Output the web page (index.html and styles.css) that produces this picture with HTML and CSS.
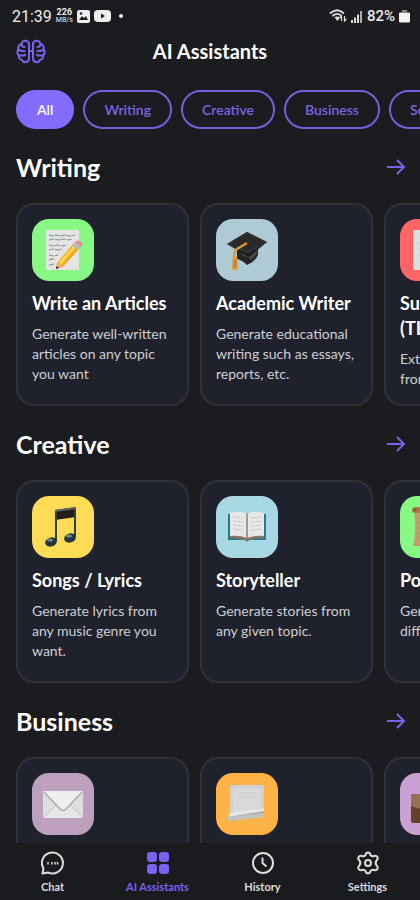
FILE: index.html
```html
<!DOCTYPE html>
<html lang="en">
  <head>
    <meta charset="UTF-8" />
    <meta name="viewport" content="width=device-width, initial-scale=1.0" />
    <title>AI Assistants</title>
    <link rel="stylesheet" href="styles.css">
  </head>
  <body>
    <!-- Status bar -->
    <div class="status-bar">
      <div class="status-group">
        <span class="clock">21:39</span>
        <span class="net-speed"><b>226</b><small>MB/s</small></span>
        <svg width="13" height="13" viewBox="0 0 13 13">
          <rect width="13" height="13" rx="2" fill="#eeeeee" />
          <path d="M2 10l3-4 2 2 2-2 2 4z" fill="#1b1c20" />
          <circle cx="4" cy="3.5" r="1.2" fill="#1b1c20" />
        </svg>
        <svg width="17" height="12" viewBox="0 0 17 12">
          <rect width="17" height="12" rx="4" fill="#eeeeee" />
          <path d="M7 3.5v5L11 6z" fill="#1b1c20" />
        </svg>
        <span class="status-dot"></span>
      </div>
      <div class="status-group">
        <svg width="18" height="14" viewBox="0 0 18 14" fill="none" stroke="#dddddd" stroke-width="1.8">
          <path d="M1 4.5Q8 -2 15 4.5M3.5 7Q8 3 12 6.5" />
          <path d="M5.5 8.5L8.5 12L11 8.5Q8 6.5 5.5 8.5z" fill="#dddddd" stroke="none" />
          <path d="M12.5 12V7l-2 2M15.5 7v5l2-2" stroke-width="1.2" />
        </svg>
        <svg width="12" height="13" viewBox="0 0 12 13" fill="#dddddd">
          <path d="M0 10h2v3H0zM3 7.5h2V13H3zM6 4.5h2V13H6z" />
          <path d="M9 1h2v12H9z" opacity=".75" />
        </svg>
        <span class="battery-level">82%</span>
        <svg width="11" height="14" viewBox="0 0 11 14">
          <path d="M3 1h5v2h1.5Q11 3 11 4.5H0Q0 3 1.5 3H3z" fill="#888888" />
          <path d="M0 4h11v8q0 1.5-1.5 1.5h-8Q0 13.5 0 12z" fill="#f4f4f4" />
        </svg>
      </div>
    </div>

    <!-- App header -->
    <header class="app-header">
      <svg class="logo" width="30" height="30" viewBox="0 0 30 30">
        <path d="M13 7a4 4 0 0 0-7.500 1A4 4 0 0 0 2.500 13.500a4 4 0 0 0 .5 6A4 4 0 0 0 6 24a3.700 3.700 0 0 0 7-1z" />
        <path d="M17 7a4 4 0 0 1 7.500 1A4 4 0 0 1 27.500 13.500a4 4 0 0 1-.5 6A4 4 0 0 1 24 24a3.700 3.700 0 0 1-7-1z" />
        <path d="M13 15h4M5.500 8q0 3 3 3M2.500 13.500q2 2 6 1.500M3 19.500h5q1 0 1-1M24.500 8q0 3-3 3M27.500 13.500q-2 2-6 1.500M27 19.500h-5q-1 0-1-1" />
      </svg>
      <h1>AI Assistants</h1>
    </header>

    <!-- Category filter -->
    <div class="chips">
      <button class="chip active">All</button>
      <button class="chip">Writing</button>
      <button class="chip">Creative</button>
      <button class="chip">Business</button>
      <button class="chip">Social Media</button>
    </div>

    <main class="content">
      <section>
        <div class="section-head">
          <h2>Writing</h2>
          <a href="#writing" aria-label="More writing assistants">
            <svg class="arrow" width="20" height="18" viewBox="0 0 20 18"><path d="M1 9h17M11 2l7 7-7 7" /></svg>
          </a>
        </div>
        <div class="cards" id="writing">
          <article class="card">
            <div class="tile green">
              <svg width="42" height="42" viewBox="0 0 42 42">
                <path d="M4 1h33v40H4z" fill="#e4e5e2" />
                <path d="M7 6l4 1 3-1 5 1 4-1 5 1 5-1M7 11l5-1 4 1 6-1 5 1 3-1M7 16l4 1 4-1 5 1 4-1M7 21l5-1 4 1 4-1M7 26l5 1 4-1M7 31l3-1 3 1M7 36l5-1" fill="none" stroke="#8b8e91" stroke-width="1.2" stroke-dasharray="5 1" />
                <path d="M15 34L32 14l6 5-17 19-7 2z" fill="#efaa20" />
                <path d="M17 33L33 15l2 2-16 19z" fill="#ffd452" />
                <path d="M15 33l6 5-7 2z" fill="#dfb77e" />
                <path d="M14.5 37l2.5 2-3 1z" fill="#292522" />
                <path d="M30 16l3-3 6 5-3 3z" fill="#b9bdc4" />
                <path d="M33 13q3-3 6 0 3 2 0 5z" fill="#eb8790" />
              </svg>
            </div>
            <h3>Write an Articles</h3>
            <p>Generate well-written articles on any topic you want</p>
          </article>
          <article class="card">
            <div class="tile steel">
              <svg width="42" height="42" viewBox="0 0 42 42">
                <path d="M11 20v10q5 1 10 6 8-3 11-10V17z" fill="#242424" />
                <path d="M13 24q8 1 12 7l6-6v-4L20 28z" fill="#4a4947" />
                <path d="M1 15L21 3l20 10-18 15z" fill="#1d1d1e" />
                <path d="M1 15L21 3l20 10-19 12z" fill="#343434" />
                <path d="M4 15L21 5l17 8-17 9z" fill="#292929" />
                <path d="M21 14l-10 6q-3 2-3 9" fill="none" stroke="#d99b30" stroke-width="2.5" />
                <path d="M7 27h4l1 14H6z" fill="#e6a13a" />
                <path d="M8 31v9M10 30v9" stroke="#b66e1c" />
              </svg>
            </div>
            <h3>Academic Writer</h3>
            <p>Generate educational writing such as essays, reports, etc.</p>
          </article>
          <article class="card">
            <div class="tile red">
              <svg width="42" height="42" viewBox="0 0 42 42">
                <path d="M3 1h33v40H3z" fill="#dededc" />
                <path d="M8 8h22M8 14h22M8 20h22M8 26h22M8 32h15" stroke="#cfcfcd" />
              </svg>
            </div>
            <h3>Summarize (TL;DR)</h3>
            <p>Extract key points from long texts</p>
          </article>
        </div>
      </section>

      <section>
        <div class="section-head">
          <h2>Creative</h2>
          <a href="#creative" aria-label="More creative assistants">
            <svg class="arrow" width="20" height="18" viewBox="0 0 20 18"><path d="M1 9h17M11 2l7 7-7 7" /></svg>
          </a>
        </div>
        <div class="cards" id="creative">
          <article class="card">
            <div class="tile yellow">
              <svg width="42" height="42" viewBox="0 0 42 42">
                <path d="M13 4l21-3v10l-21 3z" fill="#251e1b" />
                <path d="M14 35V5M33 31V2" stroke="#294049" stroke-width="2" />
                <path d="M13 4l21-3v2L13 6z" fill="#5c6667" />
                <ellipse cx="9" cy="36" rx="6" ry="4.5" transform="rotate(-15 9 36)" fill="#26353b" />
                <ellipse cx="28" cy="32" rx="6" ry="4.5" transform="rotate(-15 28 32)" fill="#26353b" />
                <ellipse cx="8" cy="34" rx="3" ry="1.5" fill="#6f8b8f" />
                <ellipse cx="27" cy="30" rx="3" ry="1.5" fill="#6f8b8f" />
              </svg>
            </div>
            <h3>Songs / Lyrics</h3>
            <p>Generate lyrics from any music genre you want.</p>
          </article>
          <article class="card">
            <div class="tile sky">
              <svg width="42" height="42" viewBox="0 0 42 42">
                <path d="M2 8h38v26H23q-2 3-4 0H2z" fill="#267993" />
                <path d="M4 7q10-3 17 1 7-4 17-1v24q-10-1-17 2-7-3-17-2z" fill="#e7e7e5" />
                <path d="M20 7l1 1 1-1v26h-2z" fill="#9a9b9a" />
                <path d="M4 30q10-1 17 2 7-3 17-2v2q-10 0-17 3-7-3-17-3z" fill="#8b755e" />
                <path d="M7 11l10 1M7 15l10 1M7 19l10 1M7 23l10 1M25 12l10-1M25 16l10-1M25 20l10-1M25 24l10-1" stroke="#c4c6c6" stroke-dasharray="3 1" />
              </svg>
            </div>
            <h3>Storyteller</h3>
            <p>Generate stories from any given topic.</p>
          </article>
          <article class="card">
            <div class="tile green">
              <svg width="42" height="42" viewBox="0 0 42 42">
                <path d="M4 4h31q-3 17 1 36H3q4-16 1-36z" fill="#c79a6c" />
                <path d="M2 4q0-3 4-3h30v6H5Q2 7 2 4z" fill="#ad7c50" />
                <circle cx="5" cy="4" r="2" fill="#8f6342" />
                <path d="M9 12h21M9 17h21M9 22h21M9 27h21M9 32h21" stroke="#b98a60" />
              </svg>
            </div>
            <h3>Poems</h3>
            <p>Generate poems in different styles</p>
          </article>
        </div>
      </section>

      <section>
        <div class="section-head">
          <h2>Business</h2>
          <a href="#business" aria-label="More business assistants">
            <svg class="arrow" width="20" height="18" viewBox="0 0 20 18"><path d="M1 9h17M11 2l7 7-7 7" /></svg>
          </a>
        </div>
        <div class="cards" id="business">
          <article class="card">
            <div class="tile mauve">
              <svg width="42" height="42" viewBox="0 0 42 42">
                <path d="M1 8h40v27H1z" fill="#dededf" />
                <path d="M1 35l15-14h10l15 14z" fill="#e6e6e6" />
                <path d="M1 35l13-13M41 35L28 22" stroke="#c4c4c6" />
                <path d="M1 8h40L24 26q-3 3-6 0z" fill="#eeeeee" />
                <path d="M2 9l16 17q3 3 6 0L40 9" fill="none" stroke="#a9a9ac" stroke-width="1.4" />
              </svg>
            </div>
          </article>
          <article class="card">
            <div class="tile orange">
              <svg width="42" height="42" viewBox="0 0 42 42">
                <path d="M4 2h34v26L4 32z" fill="#cfd0d0" />
                <path d="M7 5h28v21L7 30z" fill="#d8d9d9" />
                <path d="M11 10h19M11 14h19" stroke="#cbcccc" />
                <path d="M3 32l35-7v8L3 38q-3-2 0-6z" fill="#a9abab" />
                <path d="M4 30l34-5v3L2 34z" fill="#e7e7e7" />
                <path d="M2 34l36-4v4L2 38z" fill="#c1c3c3" />
              </svg>
            </div>
          </article>
          <article class="card">
            <div class="tile lilac">
              <svg width="42" height="42" viewBox="0 0 42 42">
                <path d="M14 12V8h14v4" fill="none" stroke="#4b2e1e" stroke-width="3" />
                <rect x="1" y="11" width="40" height="29" rx="2" fill="#65402a" />
                <path d="M1 13q0-2 2-2h36q2 0 2 2v10q-20 8-40 0z" fill="#967052" />
              </svg>
            </div>
          </article>
        </div>
      </section>
    </main>

    <!-- Bottom navigation -->
    <nav class="bottom-nav">
      <a href="#chat">
        <svg width="24" height="24" viewBox="0 0 24 24" fill="none" stroke="currentColor" stroke-width="2">
          <path d="M1.5 22.5l1-5A10.500 10.500 0 1 1 7 21.500z" stroke-linejoin="round" />
          <path d="M7 11v2.500M11 11v2.500M14 11v2.500M16.500 11v2.500" stroke-width="1.500" />
        </svg>
        Chat
      </a>
      <a href="#assistants" class="active">
        <svg width="24" height="24" viewBox="0 0 24 24" fill="currentColor">
          <rect x="1" y="1" width="10" height="10" rx="3" />
          <rect x="13" y="1" width="10" height="10" rx="3" />
          <rect x="1" y="13" width="10" height="10" rx="3" />
          <rect x="13" y="13" width="10" height="10" rx="3" />
        </svg>
        AI Assistants
      </a>
      <a href="#history">
        <svg width="24" height="24" viewBox="0 0 24 24" fill="none" stroke="currentColor" stroke-width="2">
          <circle cx="12" cy="12" r="10" />
          <path d="M11.5 6.500V12l4 3.500" />
        </svg>
        History
      </a>
      <a href="#settings">
        <svg width="24" height="24" viewBox="0 0 24 24" fill="none" stroke="currentColor" stroke-width="2" stroke-linejoin="round">
          <path d="M9.5 4q.5-2.500 2.500-2.500T14.500 4q1.500 1.700 3.500 1 2.400-.7 3.400 1t-.8 3.400q-2 2.600 0 5.200 1.800 1.700.8 3.400t-3.400 1q-2-.7-3.500 1-.5 2.500-2.500 2.500T9.500 20Q8 18.300 6 19q-2.400.7-3.400-1t.8-3.400q2-2.600 0-5.200Q1.600 7.700 2.600 6T6 5q2 .7 3.500-1z" />
          <circle cx="12" cy="12" r="3" />
        </svg>
        Settings
      </a>
    </nav>
  </body>
</html>
```
FILE: styles.css
```css
* {
  box-sizing: border-box;
}

body {
  margin: 0;
  height: 100vh;
  display: flex;
  flex-direction: column;
  overflow: hidden;
  background: #1b1c20;
  color: #ffffff;
  font-family: Lato, sans-serif;
}

h1,
h2,
h3,
p {
  margin: 0;
}

svg {
  display: block;
  flex-shrink: 0;
}

/* Status bar */
.status-bar {
  display: flex;
  justify-content: space-between;
  align-items: center;
  height: 32px;
  padding: 0 10px 0 12px;
  color: #eeeeee;
  font-family: Roboto, sans-serif;
}

.status-group {
  display: flex;
  align-items: center;
  gap: 4px;
}

.clock {
  font-size: 16px;
}

.net-speed {
  display: flex;
  flex-direction: column;
  text-align: center;
  line-height: 8px;
}

.net-speed b {
  font-size: 9px;
}

.net-speed small {
  font-size: 7px;
}

.status-dot {
  width: 4px;
  height: 4px;
  margin-left: 4px;
  border-radius: 50%;
  background: #eeeeee;
}

.battery-level {
  font-size: 15px;
  font-weight: 500;
}

/* App header */
.app-header {
  display: grid;
  grid-template-columns: 30px 1fr 30px;
  align-items: center;
  height: 38px;
  padding: 0 16px;
}

.logo {
  fill: none;
  stroke: #7a62f0;
  stroke-width: 2;
  stroke-linecap: round;
  stroke-linejoin: round;
}

.app-header h1 {
  font-size: 20px;
  text-align: center;
}

/* Category filter */
.chips {
  display: flex;
  flex-shrink: 0;
  gap: 9px;
  padding: 20px 16px 22px;
  overflow-x: auto;
  scrollbar-width: none;
}

.chip {
  flex-shrink: 0;
  height: 39px;
  padding: 0 19px;
  border: 2px solid #765fdc;
  border-radius: 20px;
  background: none;
  color: #7c65e4;
  font-family: inherit;
  font-size: 14px;
  font-weight: 600;
  cursor: pointer;
}

.chip.active {
  border-color: #836bfd;
  background: #836bfd;
  color: #ffffff;
}

/* Sections */
.content {
  flex: 1;
  min-height: 0;
  overflow-y: auto;
  scrollbar-width: none;
}

.section-head {
  display: flex;
  justify-content: space-between;
  align-items: center;
  height: 32px;
  margin-bottom: 20px;
  padding: 0 14px 0 16px;
}

.section-head h2 {
  font-size: 25px;
  line-height: 32px;
}

.arrow {
  fill: none;
  stroke: #7a62e8;
  stroke-width: 2;
}

.cards {
  display: flex;
  gap: 11px;
  margin-bottom: 22px;
  padding: 0 16px;
  overflow-x: auto;
  scrollbar-width: none;
}

.card {
  flex: 0 0 173px;
  min-height: 203px;
  padding: 14px;
  border: 2px solid #303137;
  border-radius: 18px;
  background: #1f212c;
}

.card h3 {
  margin-top: 10px;
  font-size: 18px;
  line-height: 25px;
}

.card p {
  margin-top: 8px;
  color: #cfcfd3;
  font-size: 14px;
  line-height: 20px;
}

/* Icon tiles */
.tile {
  display: grid;
  place-items: center;
  width: 62px;
  height: 62px;
  border-radius: 17px;
}

.green {
  background: #88f884;
}

.steel {
  background: #aecbd5;
}

.red {
  background: #ff6564;
}

.yellow {
  background: #ffdc56;
}

.sky {
  background: #a8d8e4;
}

.mauve {
  background: #bda0bd;
}

.orange {
  background: #ffb347;
}

.lilac {
  background: #cba0d3;
}

/* Bottom navigation */
.bottom-nav {
  display: grid;
  grid-template-columns: repeat(4, 1fr);
  height: 57px;
  flex-shrink: 0;
  padding-top: 8px;
  background: #1a1b1e;
}

.bottom-nav a {
  display: flex;
  flex-direction: column;
  align-items: center;
  gap: 5px;
  color: #dddddd;
  font-size: 11px;
  font-weight: bold;
  line-height: 14px;
  text-decoration: none;
}

.bottom-nav .active {
  color: #7a62f0;
}
```
